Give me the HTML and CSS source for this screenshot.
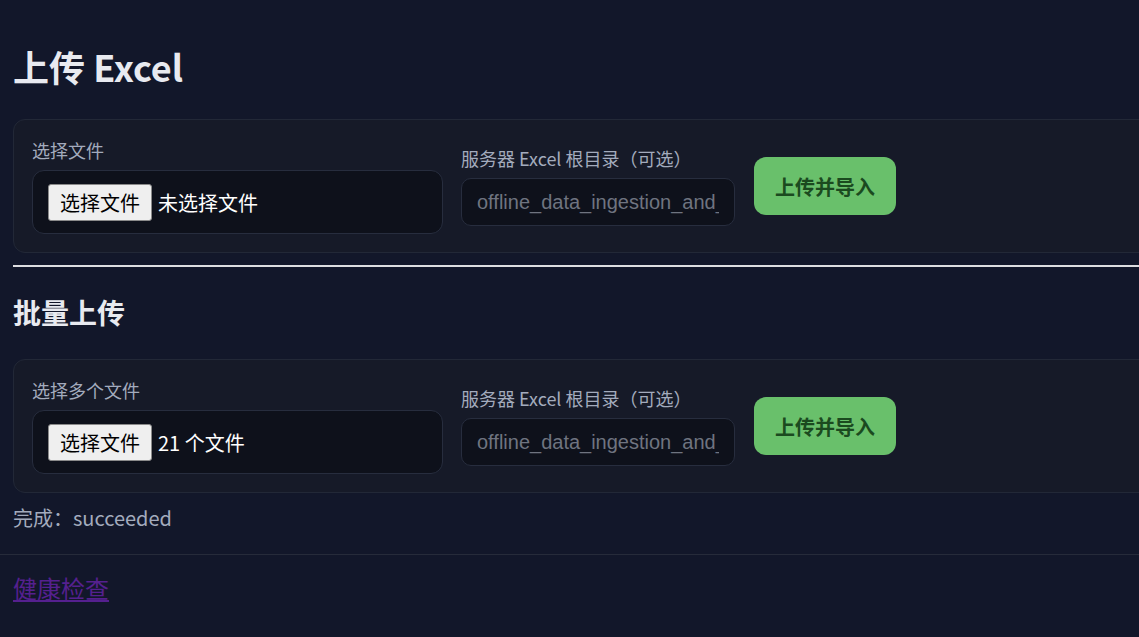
FILE: index.html
```html
<!DOCTYPE html>
<html lang="zh-CN">
<head>
<meta charset="utf-8">
<title>上传 Excel</title>
<link rel="stylesheet" href="styles.css">
</head>
<body>
<main class="page">
  <h1 class="title">上传 Excel</h1>
  <form class="card">
    <div class="field">
      <span class="label">选择文件</span>
      <div class="filebox">
        <span class="filebtn">选择文件</span>
        <span class="filetext">未选择文件</span>
      </div>
    </div>
    <div class="field">
      <span class="label">服务器 Excel 根目录（可选）</span>
      <input class="textin" type="text" placeholder="offline_data_ingestion_and_analysis">
    </div>
    <button class="submit" type="button">上传并导入</button>
  </form>
  <hr class="divider">
  <h2 class="subtitle">批量上传</h2>
  <form class="card">
    <div class="field">
      <span class="label">选择多个文件</span>
      <div class="filebox">
        <span class="filebtn">选择文件</span>
        <span class="filetext">21 个文件</span>
      </div>
    </div>
    <div class="field">
      <span class="label">服务器 Excel 根目录（可选）</span>
      <input class="textin" type="text" placeholder="offline_data_ingestion_and_analysis">
    </div>
    <button class="submit" type="button">上传并导入</button>
  </form>
  <p class="status">完成：succeeded</p>
</main>
<footer class="footer">
  <a class="link" href="#">健康检查</a>
</footer>
</body>
</html>
```
FILE: styles.css
```css
html {
  overflow: hidden;
}
body {
  margin: 0;
  background: #12172a;
  color: #e8eaf0;
  font-family: "Noto Sans CJK SC", "Noto Sans", sans-serif;
  width: 1400px;
}
.page {
  padding: 43px 0 0 13px;
}
.title {
  margin: 0 0 30px;
  font-size: 36px;
  line-height: 46px;
  font-weight: 700;
}
.card {
  display: grid;
  grid-template-columns: 411px 274px auto;
  column-gap: 18px;
  align-items: center;
  justify-content: start;
  padding: 18px;
  border: 1px solid #222837;
  border-radius: 12px;
  background: #161a28;
}
.field {
  display: flex;
  flex-direction: column;
  gap: 8px;
}
.label {
  font-size: 18px;
  line-height: 24px;
  color: #a3abbd;
}
.filebox {
  display: flex;
  align-items: center;
  gap: 6px;
  height: 62px;
  padding: 0 15px;
  border: 1px solid #272d3e;
  border-radius: 12px;
  background: #0e111b;
}
.filebtn {
  display: inline-flex;
  align-items: center;
  height: 35px;
  padding: 0 11px;
  border: 1px solid #8a8a8a;
  border-radius: 3px;
  background: #efefef;
  color: #000;
  font-size: 20px;
}
.filetext {
  color: #ffffff;
  font-size: 20px;
}
.textin {
  box-sizing: border-box;
  width: 100%;
  height: 48px;
  margin: 0;
  padding: 0 15px;
  border: 1px solid #272d3e;
  border-radius: 10px;
  background: #0e111b;
  color: #e8eaf0;
  font-family: "Liberation Sans", Arial, sans-serif;
  font-size: 20px;
  outline: none;
}
.textin::placeholder {
  color: #6f7480;
}
.submit {
  height: 58px;
  padding: 0 21px;
  margin: 0 0 0 1px;
  border: none;
  border-radius: 12px;
  background: #69c06b;
  color: #1b4a1f;
  font-family: "Noto Sans CJK SC", sans-serif;
  font-size: 20px;
  font-weight: 700;
}
.divider {
  margin: 12px 0 0;
  height: 0;
  border: none;
  border-top: 2px solid #dcdde0;
}
.subtitle {
  margin: 27px 0 29px;
  font-size: 28px;
  line-height: 36px;
  font-weight: 700;
}
.status {
  margin: 10px 0 0;
  font-size: 20px;
  line-height: 30px;
  color: #a3abbd;
}
.footer {
  margin-top: 21px;
  border-top: 1px solid #262b3a;
  padding: 16px 13px 40px;
}
.link {
  font-size: 24px;
  line-height: 34px;
  color: #55208f;
}
```
